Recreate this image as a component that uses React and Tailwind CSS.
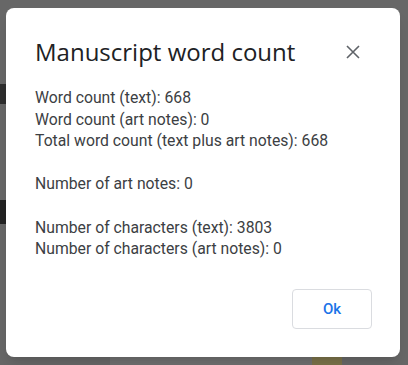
import React from 'react';

const lines = [
  'Word count (text): 668',
  'Word count (art notes): 0',
  'Total word count (text plus art notes): 668',
  '',
  'Number of art notes: 0',
  '',
  'Number of characters (text): 3803',
  'Number of characters (art notes): 0',
];

const App = () => {
  return (
    <div className="relative w-[408px] h-[365px] overflow-hidden bg-[#676767]">
      {/* dimmed document behind the dialog */}
      <div className="absolute left-0 top-[84px] w-[12px] h-[20px] bg-[#2e2e2e]" />
      <div className="absolute left-0 top-[200px] w-[12px] h-[24px] bg-[#232323]" />
      <div className="absolute left-[110px] top-[357px] w-[220px] h-[8px] bg-[#6f6f6f]" />
      <div className="absolute left-[312px] top-[357px] w-[30px] h-[8px] bg-[#7a7149]" />

      <div className="absolute left-[6px] top-[8px] w-[394px] h-[349px] bg-white rounded-[8px] shadow-lg flex flex-col pl-[29px] pr-[28px]">
        <div className="flex items-center justify-between pt-[29px]">
          <h1 className="text-[24px] leading-[30px] text-[#202124]" style={{ fontFamily: '"Open Sans", Roboto, sans-serif' }}>
            Manuscript word count
          </h1>
          <button className="w-[24px] h-[24px] flex items-center justify-center text-[#5f6368] mr-[7px]">
            <svg width="14" height="14" viewBox="0 0 14 14" fill="none" stroke="currentColor" strokeWidth="1.6">
              <path d="M1 1L13 13M13 1L1 13" />
            </svg>
          </button>
        </div>
        <div className="mt-[20px] text-[15.75px] leading-[21.6px] text-[#3c4043]" style={{ fontFamily: 'Roboto, sans-serif' }}>
          {lines.map((l, i) => (
            <div key={i} className="h-[21.6px]">{l}</div>
          ))}
        </div>
        <div className="flex justify-end mt-auto mb-[28px]">
          <button
            className="w-[80px] h-[40px] border border-[#dadce0] rounded-[4px] text-[#1a73e8] text-[15px] font-medium"
            style={{ fontFamily: 'Roboto, sans-serif' }}
          >
            Ok
          </button>
        </div>
      </div>
    </div>
  );
};

export default App;
